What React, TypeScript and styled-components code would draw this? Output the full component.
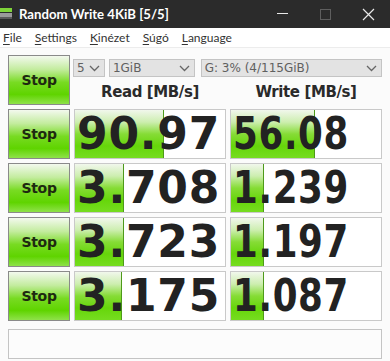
import React from 'react'
import styled, { createGlobalStyle } from 'styled-components'

const Global = createGlobalStyle`
  html, body { margin: 0; padding: 0; background: #fbfbfb; }
  body { font-family: "Open Sans", "DejaVu Sans", sans-serif; }
`

const Window = styled.div`
  width: 390px;
  height: 361px;
  display: flex;
  flex-direction: column;
  background: #fbfbfb;
  overflow: hidden;
`

const TitleBar = styled.div`
  height: 28px;
  background: #2b2b2b;
  display: flex;
  align-items: center;
  color: #fff;
`

const TitleText = styled.div`
  flex: 1;
  font-family: Lato, "Open Sans", sans-serif;
  font-size: 13.2px;
  font-weight: 700;
  margin-left: 5px;
`

const WinButton = styled.div<{ $dim?: boolean }>`
  width: 43px;
  height: 28px;
  display: flex;
  align-items: center;
  justify-content: center;
  color: ${(p) => (p.$dim ? '#6a6a6a' : '#e8e8e8')};
`

const MenuBar = styled.div`
  height: 19px;
  background: #fff;
  display: flex;
  align-items: center;
  gap: 13px;
  padding-left: 3px;
  font-family: Lato, "Open Sans", sans-serif;
  font-size: 12px;
  color: #333;
  border-bottom: 1px solid #ececec;
`

const MenuItem = styled.span`
  & u { text-decoration: underline; text-underline-offset: 2px; }
`

const Body = styled.div`
  display: grid;
  grid-template-columns: 62px 152px 152px;
  grid-auto-rows: 50px;
  column-gap: 4px;
  row-gap: 4px;
  padding: 7px 0 0 8px;
`

const StopButton = styled.div`
  box-sizing: border-box;
  border: 1px solid #8a8a8a;
  background: linear-gradient(to bottom, #f3f9ee 0%, #c3ec9e 28%, #78db22 55%, #5fd400 80%, #8fe24a 100%);
  display: flex;
  align-items: center;
  justify-content: center;
  font-family: "DejaVu Sans", Verdana, sans-serif;
  font-weight: bold;
  font-size: 14px;
  letter-spacing: -0.3px;
  color: #1e2a10;
`

const Controls = styled.div`
  grid-column: 2 / 4;
  display: flex;
  flex-direction: column;
`

const SelectRow = styled.div`
  display: flex;
  gap: 4px;
  margin-top: 4px;
`

const Select = styled.div<{ $w: number; $ml?: number }>`
  box-sizing: border-box;
  width: ${(p) => p.$w}px;
  margin-left: ${(p) => p.$ml ?? 0}px;
  height: 18px;
  background: #e3e3e3;
  border: 1px solid #c4c4c4;
  display: flex;
  align-items: center;
  justify-content: space-between;
  padding: 0 4px 0 3px;
  font-family: "DejaVu Sans", Verdana, sans-serif;
  font-size: 12px;
  color: #606060;
`

const Headers = styled.div`
  display: grid;
  grid-template-columns: 152px 152px;
  column-gap: 4px;
  margin-top: 6px;
`

const Header = styled.div`
  text-align: center;
  font-family: "DejaVu Sans", Verdana, sans-serif;
  font-weight: bold;
  font-size: 15px;
  letter-spacing: -0.4px;
  color: #2a2a2a;
`

const ValueBox = styled.div`
  position: relative;
  box-sizing: border-box;
  border: 1px solid #c9c9c9;
  background: #fff;
  overflow: hidden;
  display: flex;
  align-items: center;
  padding-left: 2px;
`

const Bar = styled.div`
  position: absolute;
  left: 0;
  top: 0;
  bottom: 0;
  background: linear-gradient(to bottom, #f1f7ec 0%, #cdeeb0 25%, #86dc36 50%, #66d60a 75%, #76dc20 100%);
  border-right: 1px solid #4e9a1a;
`

const Value = styled.span<{ $sx: number }>`
  position: relative;
  display: inline-block;
  font-family: "DejaVu Sans", Verdana, sans-serif;
  font-weight: bold;
  font-size: 44px;
  letter-spacing: 0.8px;
  line-height: 1;
  color: #222;
  transform: scaleX(${(p) => p.$sx});
  transform-origin: left center;
`

const StatusBox = styled.div`
  box-sizing: border-box;
  height: 30px;
  margin: 8px 8px 0 8px;
  border: 1px solid #c4c4c4;
  background: #fcfcfc;
`

const Chevron = () => (
  <svg width="11" height="7" viewBox="0 0 11 7">
    <path d="M1 1 L5.5 5.5 L10 1" fill="none" stroke="#666" strokeWidth="1.3" />
  </svg>
)

const rows = [
  { read: '90.97', rw: 88, write: '56.08', ww: 83 },
  { read: '3.708', rw: 48, write: '1.239', ww: 32 },
  { read: '3.723', rw: 48, write: '1.197', ww: 32 },
  { read: '3.175', rw: 46, write: '1.087', ww: 32 },
]

export default function App() {
  return (
    <Window>
      <Global />
      <TitleBar>
        <svg width="14" height="16" viewBox="0 0 14 16">
          <rect x="0" y="2" width="12" height="4" fill="#7fd43a" />
          <rect x="0" y="7" width="12" height="4" fill="#9a9a9a" />
          <rect x="0" y="11" width="12" height="2" fill="#5a5a5a" />
        </svg>
        <TitleText>Random Write 4KiB [5/5]</TitleText>
        <WinButton>
          <svg width="11" height="2" viewBox="0 0 11 2"><rect width="11" height="1" fill="#e8e8e8" /></svg>
        </WinButton>
        <WinButton $dim>
          <svg width="11" height="11" viewBox="0 0 11 11"><rect x="0.5" y="0.5" width="10" height="10" fill="none" stroke="#5e5e5e" /></svg>
        </WinButton>
        <WinButton>
          <svg width="13" height="13" viewBox="0 0 13 13">
            <path d="M1 1 L12 12 M12 1 L1 12" stroke="#e8e8e8" strokeWidth="1.2" />
          </svg>
        </WinButton>
      </TitleBar>
      <MenuBar>
        <MenuItem><u>F</u>ile</MenuItem>
        <MenuItem><u>S</u>ettings</MenuItem>
        <MenuItem><u>K</u>inézet</MenuItem>
        <MenuItem><u>S</u>úgó</MenuItem>
        <MenuItem><u>L</u>anguage</MenuItem>
      </MenuBar>
      <Body>
        <StopButton>Stop</StopButton>
        <Controls>
          <SelectRow>
            <Select $w={32} $ml={-1}>5 <Chevron /></Select>
            <Select $w={86}>1GiB <Chevron /></Select>
            <Select $w={182} $ml={2}>G: 3% (4/115GiB) <Chevron /></Select>
          </SelectRow>
          <Headers>
            <Header>Read [MB/s]</Header>
            <Header>Write [MB/s]</Header>
          </Headers>
        </Controls>
        {rows.map((r, i) => (
          <React.Fragment key={i}>
            <StopButton>Stop</StopButton>
            <ValueBox>
              <Bar style={{ width: r.rw }} />
              <Value $sx={1}>{r.read}</Value>
            </ValueBox>
            <ValueBox>
              <Bar style={{ width: r.ww }} />
              <Value $sx={0.81}>{r.write}</Value>
            </ValueBox>
          </React.Fragment>
        ))}
      </Body>
      <StatusBox />
    </Window>
  )
}
